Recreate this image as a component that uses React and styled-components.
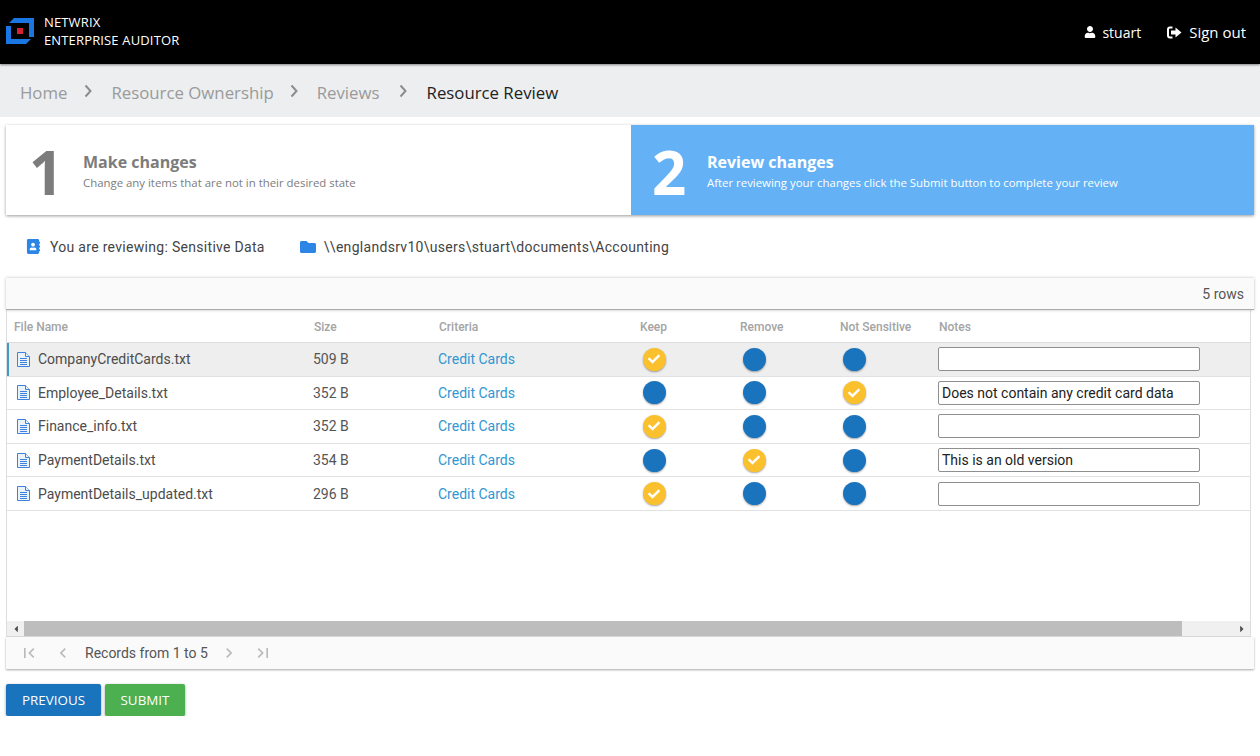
import React from 'react';
import styled, { createGlobalStyle } from 'styled-components';
import { FaUser, FaAddressBook, FaFolder, FaCheck, FaCaretLeft, FaCaretRight } from 'react-icons/fa';
import { MdFirstPage, MdLastPage, MdChevronLeft, MdChevronRight } from 'react-icons/md';

const GlobalStyle = createGlobalStyle`
html, body { margin: 0; padding: 0; background: #fff; overflow: hidden; }
* { box-sizing: border-box; }
body { font-family: Roboto, "Liberation Sans", sans-serif; }
`
const TopBar = styled.header`
height: 64px;
background: #000;
color: #fff;
display: flex;
align-items: center;
justify-content: space-between;
padding: 0 14px 0 6px;
font-family: "Open Sans", sans-serif;
box-shadow: 0 1px 2px rgba(0,0,0,.5);
position: relative;
`
const Brand = styled.div`
display: flex;
align-items: center;
gap: 10px;
padding-bottom: 2px;
`
const BrandText = styled.div`
font-size: 13px;
line-height: 18px;
font-weight: 500;
letter-spacing: 0.15px;
`
const TopActions = styled.div`
display: flex;
align-items: center;
gap: 26px;
`
const TopAction = styled.span`
display: flex;
align-items: center;
gap: ${(p) => p.$gap}px;
font-size: ${(p) => p.$size}px;
`
const Crumbs = styled.nav`
height: 52px;
margin-top: 1px;
background: #eceef0;
display: flex;
align-items: center;
padding: 2px 0 0 20px;
font-family: "Open Sans", sans-serif;
font-size: 16.8px;
`
const Crumb = styled.span`
color: ${(p) => (p.$current ? '#222' : '#9a9a9a')};
`
const CrumbArrow = styled.svg`
width: 8px;
height: 14px;
margin: 0 ${(p) => p.$after}px 3px ${(p) => p.$before}px;
`
const Steps = styled.section`
display: flex;
height: 90px;
margin: 8px 6px 0;
box-shadow: 0 1px 3px rgba(0,0,0,.4);
font-family: "Open Sans", sans-serif;
`
const Step = styled.div`
flex: 1 1 0;
min-width: 0;
display: flex;
align-items: center;
background: ${(p) => (p.$active ? '#64b2f5' : '#fff')};
color: ${(p) => (p.$active ? '#fff' : '#7c7c7c')};
padding-left: ${(p) => (p.$active ? '21px' : '23px')};
`
const StepNumber = styled.div`
font-size: 60px;
line-height: 90px;
font-weight: 700;
width: ${(p) => (p.$active ? '55px' : '54px')};
padding-top: 3px;
`
const StepText = styled.div`
padding-top: 2px;
`
const StepTitle = styled.div`
font-size: 16px;
font-weight: 700;
line-height: 22px;
`
const StepHint = styled.div`
font-size: 11.4px;
line-height: 16px;
margin-top: 2px;
`
const InfoRow = styled.div`
height: 63px;
display: flex;
align-items: center;
padding-left: 26px;
font-size: 14px;
letter-spacing: 0.3px;
color: #444;
`
const InfoItem = styled.span`
display: flex;
align-items: center;
gap: ${(p) => p.$gap}px;
margin-right: 35px;
`
const RowCount = styled.div`
height: 32px;
margin: 0 6px;
background: #fafafa;
border-bottom: 1px solid #aaa;
box-shadow: 0 0 3px rgba(0,0,0,.25);
display: flex;
align-items: center;
justify-content: flex-end;
padding-right: 10px;
font-size: 14px;
color: #555;
position: relative;
`
const Grid = styled.div`
height: 327px;
margin: 0 9px 0 6px;
border: 1px solid #ddd;
border-top: 0;
display: flex;
flex-direction: column;
`
const Rows = styled.div`
flex: 1;
`
const HeadRow = styled.div`
display: grid;
grid-template-columns: 300px 125px 201px 100px 100px 99px 1fr;
height: 33px;
padding-top: 2px;
align-items: center;
border-bottom: 1px solid #ddd;
font-size: 12px;
font-weight: 500;
color: #a4a4a4;
`
const HeadCell = styled.div`
padding-left: 7px;
`
const Row = styled.div`
display: grid;
grid-template-columns: 300px 125px 200px 100px 100px 100px 1fr;
height: 33.6px;
align-items: center;
border-bottom: 1px solid #e2e2e2;
background: ${(p) => (p.$selected ? '#eee' : '#fff')};
box-shadow: ${(p) => (p.$selected ? 'inset 2px 0 0 #3d9bc4' : 'none')};
font-size: 14px;
color: #555;
`
const FileCell = styled.div`
display: flex;
align-items: center;
gap: 8px;
padding-left: 10px;
color: #4c4c4c;
`
const FileGlyph = styled.svg`
display: block;
flex: none;
`
const Cell = styled.div`
padding-left: 6px;
`
const LinkCell = styled(Cell)`
color: #3097d1;
`
const RadioCell = styled.div`
padding-left: 10.5px;
`
const Radio = styled.span`
width: 23px;
height: 23px;
border-radius: 50%;
display: flex;
align-items: center;
justify-content: center;
background: ${(p) => (p.$on ? '#fbc02d' : '#1a73bd')};
color: #fff;
box-shadow: 0 1px 2px rgba(0,0,0,.35);
font-size: 12px;
`
const NoteInput = styled.input`
display: block;
width: 262px;
height: 24px;
margin-left: 6px;
padding: 0 3px;
border: 1px solid #8f8f8f;
border-radius: 2px;
background: #fff;
font-family: Roboto, sans-serif;
font-size: 14px;
color: #222;
`
const ScrollBar = styled.div`
height: 15px;
background: #f0f0f0;
display: flex;
align-items: center;
justify-content: space-between;
color: #505050;
font-size: 10px;
`
const ScrollArrow = styled.span`
width: 17px;
display: flex;
justify-content: center;
`
const ScrollThumb = styled.div`
width: 1158px;
height: 15px;
background: #bdbdbd;
margin-right: auto;
`
const Pager = styled.div`
height: 32px;
margin: 0 6px;
background: #fafafa;
box-shadow: 0 1px 2px rgba(0,0,0,.35);
display: flex;
align-items: center;
padding-left: 13px;
font-size: 14px;
color: #555;
`
const PagerIcon = styled.span`
display: flex;
font-size: 20px;
color: #bbb;
margin-left: ${(p) => p.$before || 0}px;
margin-right: ${(p) => p.$gap}px;
`
const Buttons = styled.div`
display: flex;
gap: 4px;
margin: 15px 6px 0;
`
const Button = styled.button`
width: ${(p) => p.$width}px;
height: 32px;
padding: 0;
border: 0;
border-radius: 2px;
background: ${(p) => p.$color};
color: #fff;
font-family: "Open Sans", sans-serif;
font-size: 13.4px;
box-shadow: 0 1px 3px rgba(0,0,0,.4);
`

const Logo = () => (
  <svg width="28" height="28" viewBox="0 0 28 28">
    <path d="M3 6 L8 1 H28 V20 H23 V6 Z" fill="#1976e2" />
    <path d="M0 9 H5 V22 H25 L20 27 H0 Z" fill="#1976e2" />
    <rect x="11" y="11" width="6" height="6" fill="#d3232e" />
  </svg>
);

const SignOut = () => (
  <svg width="15" height="13" viewBox="0 0 15 13" fill="#fff">
    <path d="M5.5 0.5 H3 A3 3 0 0 0 0 3.5 V9.5 A3 3 0 0 0 3 12.5 H5.5 V10.5 H3 A1 1 0 0 1 2 9.5 V3.5 A1 1 0 0 1 3 2.5 H5.5 Z" />
    <path d="M8.5 1.5 L14.5 6.5 L8.5 11.5 V8.5 H4 V4.5 H8.5 Z" />
  </svg>
);

const ArrowRight = ({ before, after }) => (
  <CrumbArrow viewBox="0 0 8 14" $before={before} $after={after}>
    <path d="M1.5 1.5 L6.5 7 L1.5 12.5" fill="none" stroke="#8c8c8c" strokeWidth="2" />
  </CrumbArrow>
);

const FileIcon = () => (
  <FileGlyph width="13" height="15" viewBox="0 0 13 15" fill="#eaf2fc" stroke="#3f82dc" strokeWidth="1">
    <path d="M0.5 0.5 H8.5 L12.5 4.5 V14.5 H0.5 Z" />
    <path d="M8.5 0.5 V4.5 H12.5" />
    <path d="M3 6.5 H10 M3 8.5 H10 M3 10.5 H10 M3 12.5 H10" />
  </FileGlyph>
);

const files = [
  { name: 'CompanyCreditCards.txt', size: '509 B', pick: 0, note: '' },
  { name: 'Employee_Details.txt', size: '352 B', pick: 2, note: 'Does not contain any credit card data' },
  { name: 'Finance_info.txt', size: '352 B', pick: 0, note: '' },
  { name: 'PaymentDetails.txt', size: '354 B', pick: 1, note: 'This is an old version' },
  { name: 'PaymentDetails_updated.txt', size: '296 B', pick: 0, note: '' },
];

const App = () => (
  <>
    <GlobalStyle />
    <TopBar>
      <Brand>
        <Logo />
        <BrandText>NETWRIX<br />ENTERPRISE AUDITOR</BrandText>
      </Brand>
      <TopActions>
        <TopAction $size={14} $gap={6}><FaUser size={12} />stuart</TopAction>
        <TopAction $size={15} $gap={7}><SignOut />Sign out</TopAction>
      </TopActions>
    </TopBar>
    <Crumbs>
      <Crumb>Home</Crumb><ArrowRight before={17} after={19} />
      <Crumb>Resource Ownership</Crumb><ArrowRight before={16} after={19} />
      <Crumb>Reviews</Crumb><ArrowRight before={19} after={20} />
      <Crumb $current>Resource Review</Crumb>
    </Crumbs>
    <Steps>
      <Step>
        <StepNumber>1</StepNumber>
        <StepText>
          <StepTitle>Make changes</StepTitle>
          <StepHint>Change any items that are not in their desired state</StepHint>
        </StepText>
      </Step>
      <Step $active>
        <StepNumber $active>2</StepNumber>
        <StepText>
          <StepTitle>Review changes</StepTitle>
          <StepHint>After reviewing your changes click the Submit button to complete your review</StepHint>
        </StepText>
      </Step>
    </Steps>
    <InfoRow>
      <InfoItem $gap={9}><FaAddressBook size={15} color="#2d86e6" />You are reviewing: Sensitive Data</InfoItem>
      <InfoItem $gap={8}><FaFolder size={16} color="#2d86e6" />\\englandsrv10\users\stuart\documents\Accounting</InfoItem>
    </InfoRow>
    <RowCount>5 rows</RowCount>
    <Grid>
      <Rows>
        <HeadRow>
          <HeadCell>File Name</HeadCell>
          <HeadCell>Size</HeadCell>
          <HeadCell>Criteria</HeadCell>
          <HeadCell>Keep</HeadCell>
          <HeadCell>Remove</HeadCell>
          <HeadCell>Not Sensitive</HeadCell>
          <HeadCell>Notes</HeadCell>
        </HeadRow>
        {files.map((file, i) => (
          <Row key={file.name} $selected={i === 0}>
            <FileCell><FileIcon />{file.name}</FileCell>
            <Cell>{file.size}</Cell>
            <LinkCell>Credit Cards</LinkCell>
            {[0, 1, 2].map((col) => (
              <RadioCell key={col}>
                <Radio $on={file.pick === col}>{file.pick === col && <FaCheck />}</Radio>
              </RadioCell>
            ))}
            <div><NoteInput defaultValue={file.note} /></div>
          </Row>
        ))}
      </Rows>
      <ScrollBar>
        <ScrollArrow><FaCaretLeft /></ScrollArrow>
        <ScrollThumb />
        <ScrollArrow><FaCaretRight /></ScrollArrow>
      </ScrollBar>
    </Grid>
    <Pager>
      <PagerIcon $gap={14}><MdFirstPage /></PagerIcon>
      <PagerIcon $gap={12}><MdChevronLeft /></PagerIcon>
      Records from 1 to 5
      <PagerIcon $before={11} $gap={14}><MdChevronRight /></PagerIcon>
      <PagerIcon $gap={0}><MdLastPage /></PagerIcon>
    </Pager>
    <Buttons>
      <Button $width={95} $color="#1a73bd">PREVIOUS</Button>
      <Button $width={80} $color="#4caf50">SUBMIT</Button>
    </Buttons>
  </>
);

export default App;
